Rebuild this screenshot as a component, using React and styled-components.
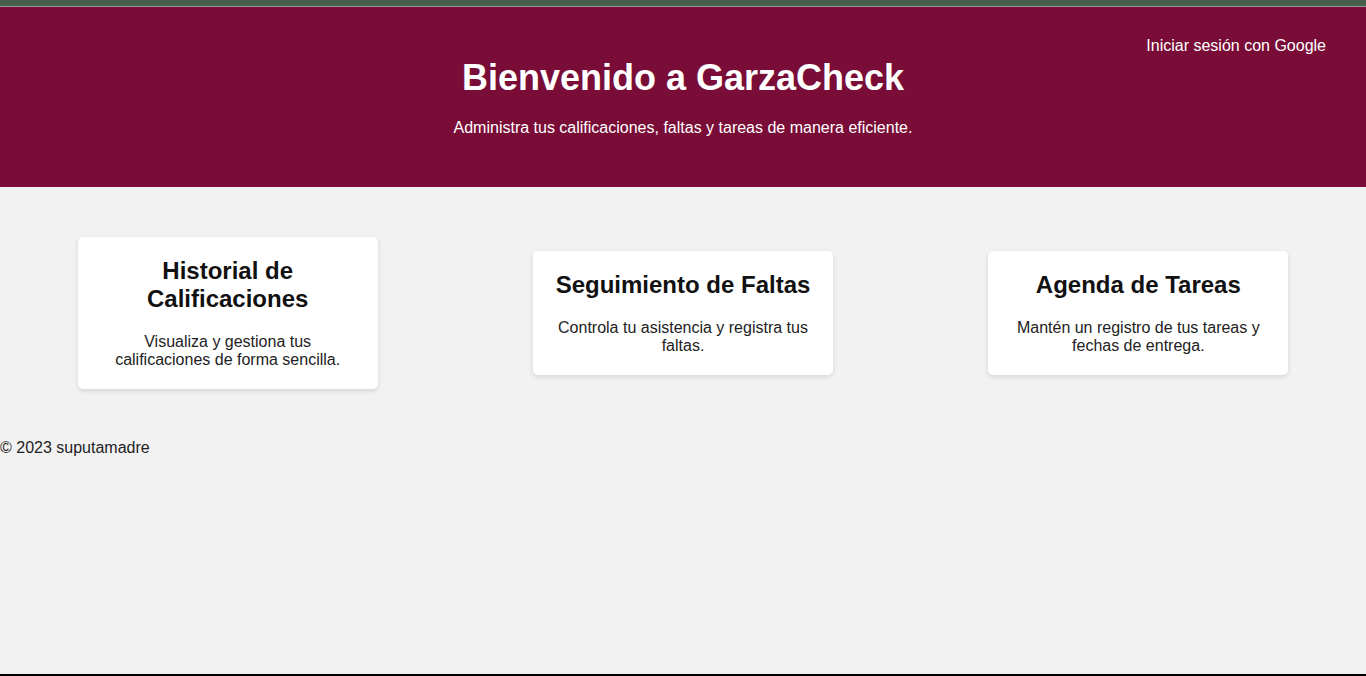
import React from "react";
import styled, { createGlobalStyle } from "styled-components";

const GlobalStyle = createGlobalStyle`
  html, body {
    margin: 0;
    padding: 0;
    background: #f2f2f2;
    font-family: "Liberation Sans", Arial, sans-serif;
  }
`;

const features = [
  {
    title: "Historial de Calificaciones",
    text: "Visualiza y gestiona tus calificaciones de forma sencilla.",
  },
  {
    title: "Seguimiento de Faltas",
    text: "Controla tu asistencia y registra tus faltas.",
  },
  {
    title: "Agenda de Tareas",
    text: "Mantén un registro de tus tareas y fechas de entrega.",
  },
];

class App extends React.Component {
  render() {
    return (
      <Page>
        <GlobalStyle />
        <TopStrip />
        <Header>
          <Nav>
            <LoginLink href="#">Iniciar sesión con Google</LoginLink>
          </Nav>
          <Title>Bienvenido a GarzaCheck</Title>
          <Subtitle>
            Administra tus calificaciones, faltas y tareas de manera eficiente.
          </Subtitle>
        </Header>
        <Features>
          {features.map((f) => (
            <Card key={f.title}>
              <CardTitle>{f.title}</CardTitle>
              <CardText>{f.text}</CardText>
            </Card>
          ))}
        </Features>
        <Footer>© 2023 suputamadre</Footer>
        <Spacer />
        <BottomBar />
      </Page>
    );
  }
}

export default App;

const Page = styled.div`
  display: flex;
  flex-direction: column;
  min-height: 100vh;
  background: #f2f2f2;
`;

const TopStrip = styled.div`
  height: 6px;
  background: #465e4a;
  border-bottom: 1px solid #8d9c8f;
`;

const Header = styled.header`
  background: #790d37;
  color: #ffffff;
  height: 180px;
  box-sizing: border-box;
  padding: 30px 40px 0;
  text-align: center;
`;

const Nav = styled.nav`
  display: flex;
  justify-content: flex-end;
  height: 18px;
`;

const LoginLink = styled.a`
  color: #ffffff;
  text-decoration: none;
  font-size: 16px;
  line-height: 18px;
`;

const Title = styled.h1`
  margin: 2px 0 0;
  font-size: 36px;
  line-height: 41px;
  font-weight: 700;
`;

const Subtitle = styled.p`
  margin: 21px 0 0;
  font-size: 16px;
  line-height: 18px;
`;

const Features = styled.section`
  display: flex;
  justify-content: space-around;
  align-items: center;
  padding: 50px 0;
`;

const Card = styled.div`
  width: 300px;
  box-sizing: border-box;
  padding: 20px;
  background: #ffffff;
  border-radius: 5px;
  box-shadow: 0 2px 5px rgba(0, 0, 0, 0.12);
  text-align: center;
`;

const CardTitle = styled.h2`
  margin: 0 0 20px;
  font-size: 24px;
  line-height: 28px;
  font-weight: 700;
  color: #111111;
`;

const CardText = styled.p`
  margin: 0;
  font-size: 16px;
  line-height: 18px;
  color: #222222;
`;

const Footer = styled.footer`
  font-size: 16px;
  line-height: 18px;
  color: #222222;
`;

const Spacer = styled.div`
  flex: 1;
`;

const BottomBar = styled.div`
  height: 2px;
  background: #000000;
`;
